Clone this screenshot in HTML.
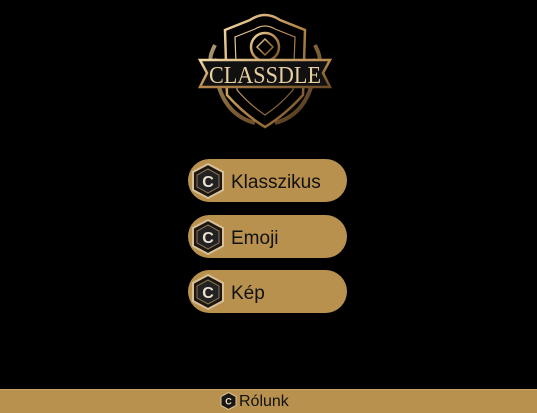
<!DOCTYPE html>
<html><head><meta charset="utf-8"><style>
html,body{margin:0;padding:0;background:#000;width:537px;height:412px;overflow:hidden;font-family:"Liberation Sans",Arial,sans-serif}
.btn{position:absolute;left:188px;width:159px;height:43px;border-radius:22px;background:#b8914f;color:#111;font-size:19px}
.btn span{position:absolute;left:43px;top:13px}
.ic{position:absolute;left:3px;top:4px}
.foot{position:absolute;left:0;top:389px;width:537px;height:23px;background:#b8914f;border-top:1px solid #c9a264}
.foot span{position:absolute;left:239px;top:3px;font-size:16px;color:#111}
</style></head><body>
<svg style="position:absolute;left:195px;top:5px" width="140" height="130" viewBox="0 0 140 130">
<defs><linearGradient id="g" x1="0" y1="0" x2="1" y2="1"><stop offset="0" stop-color="#f3d9a6"/><stop offset=".5" stop-color="#b98a4e"/><stop offset="1" stop-color="#6b4a26"/></linearGradient></defs>
<g fill="none" stroke="url(#g)" stroke-width="2.5">
<path d="M30 25 L55 15 Q70 5 85 15 L110 25 L108 90 Q90 110 70 122 Q50 110 32 90 Z"/>
<path d="M40 32 L60 24 Q70 18 80 24 L100 32 L98 85 Q85 100 70 110 Q55 100 42 85 Z" stroke-width="1.2"/>
<circle cx="70" cy="42" r="14"/><path d="M70 34 L78 42 L70 50 L62 42 Z" stroke-width="1.5"/>
<path d="M20 40 Q10 60 22 55 M120 40 Q130 60 118 55 M22 75 Q30 110 60 118 M118 75 Q110 110 80 118" stroke-width="4" opacity=".7"/>
</g>
<path d="M5 55 L135 55 L128 68 L135 82 L5 82 L12 68 Z" fill="#111" stroke="url(#g)" stroke-width="2.5"/>
<text x="70" y="78" text-anchor="middle" font-family="Liberation Serif,serif" font-size="24" fill="#e8cfa0" textLength="112" lengthAdjust="spacingAndGlyphs">CLASSDLE</text>
</svg>
<div class="btn" style="top:159px"><svg class="ic" width="34" height="36" viewBox="0 0 34 36"><path d="M17 1 L32 9 L32 27 L17 35 L2 27 L2 9 Z" fill="#1a1612" stroke="#d9c097" stroke-width="2"/><path d="M17 6 L28 12 L28 24 L17 30 L6 24 L6 12 Z" fill="#222" stroke="#8c7250" stroke-width="1"/><text x="17" y="24" text-anchor="middle" font-size="16" font-weight="bold" fill="#e9e0d0">C</text></svg><span>Klasszikus</span></div>
<div class="btn" style="top:215px"><svg class="ic" width="34" height="36" viewBox="0 0 34 36"><path d="M17 1 L32 9 L32 27 L17 35 L2 27 L2 9 Z" fill="#1a1612" stroke="#d9c097" stroke-width="2"/><path d="M17 6 L28 12 L28 24 L17 30 L6 24 L6 12 Z" fill="#222" stroke="#8c7250" stroke-width="1"/><text x="17" y="24" text-anchor="middle" font-size="16" font-weight="bold" fill="#e9e0d0">C</text></svg><span>Emoji</span></div>
<div class="btn" style="top:270px"><svg class="ic" width="34" height="36" viewBox="0 0 34 36"><path d="M17 1 L32 9 L32 27 L17 35 L2 27 L2 9 Z" fill="#1a1612" stroke="#d9c097" stroke-width="2"/><path d="M17 6 L28 12 L28 24 L17 30 L6 24 L6 12 Z" fill="#222" stroke="#8c7250" stroke-width="1"/><text x="17" y="24" text-anchor="middle" font-size="16" font-weight="bold" fill="#e9e0d0">C</text></svg><span>Kép</span></div>
<div class="foot"><svg style="position:absolute;left:220px;top:2px" width="17" height="18" viewBox="0 0 34 36"><path d="M17 1 L32 9 L32 27 L17 35 L2 27 L2 9 Z" fill="#1a1612" stroke="#d9c097" stroke-width="2"/><text x="17" y="25" text-anchor="middle" font-size="18" font-weight="bold" fill="#e9e0d0">C</text></svg><span>Rólunk</span></div>
</body></html>
